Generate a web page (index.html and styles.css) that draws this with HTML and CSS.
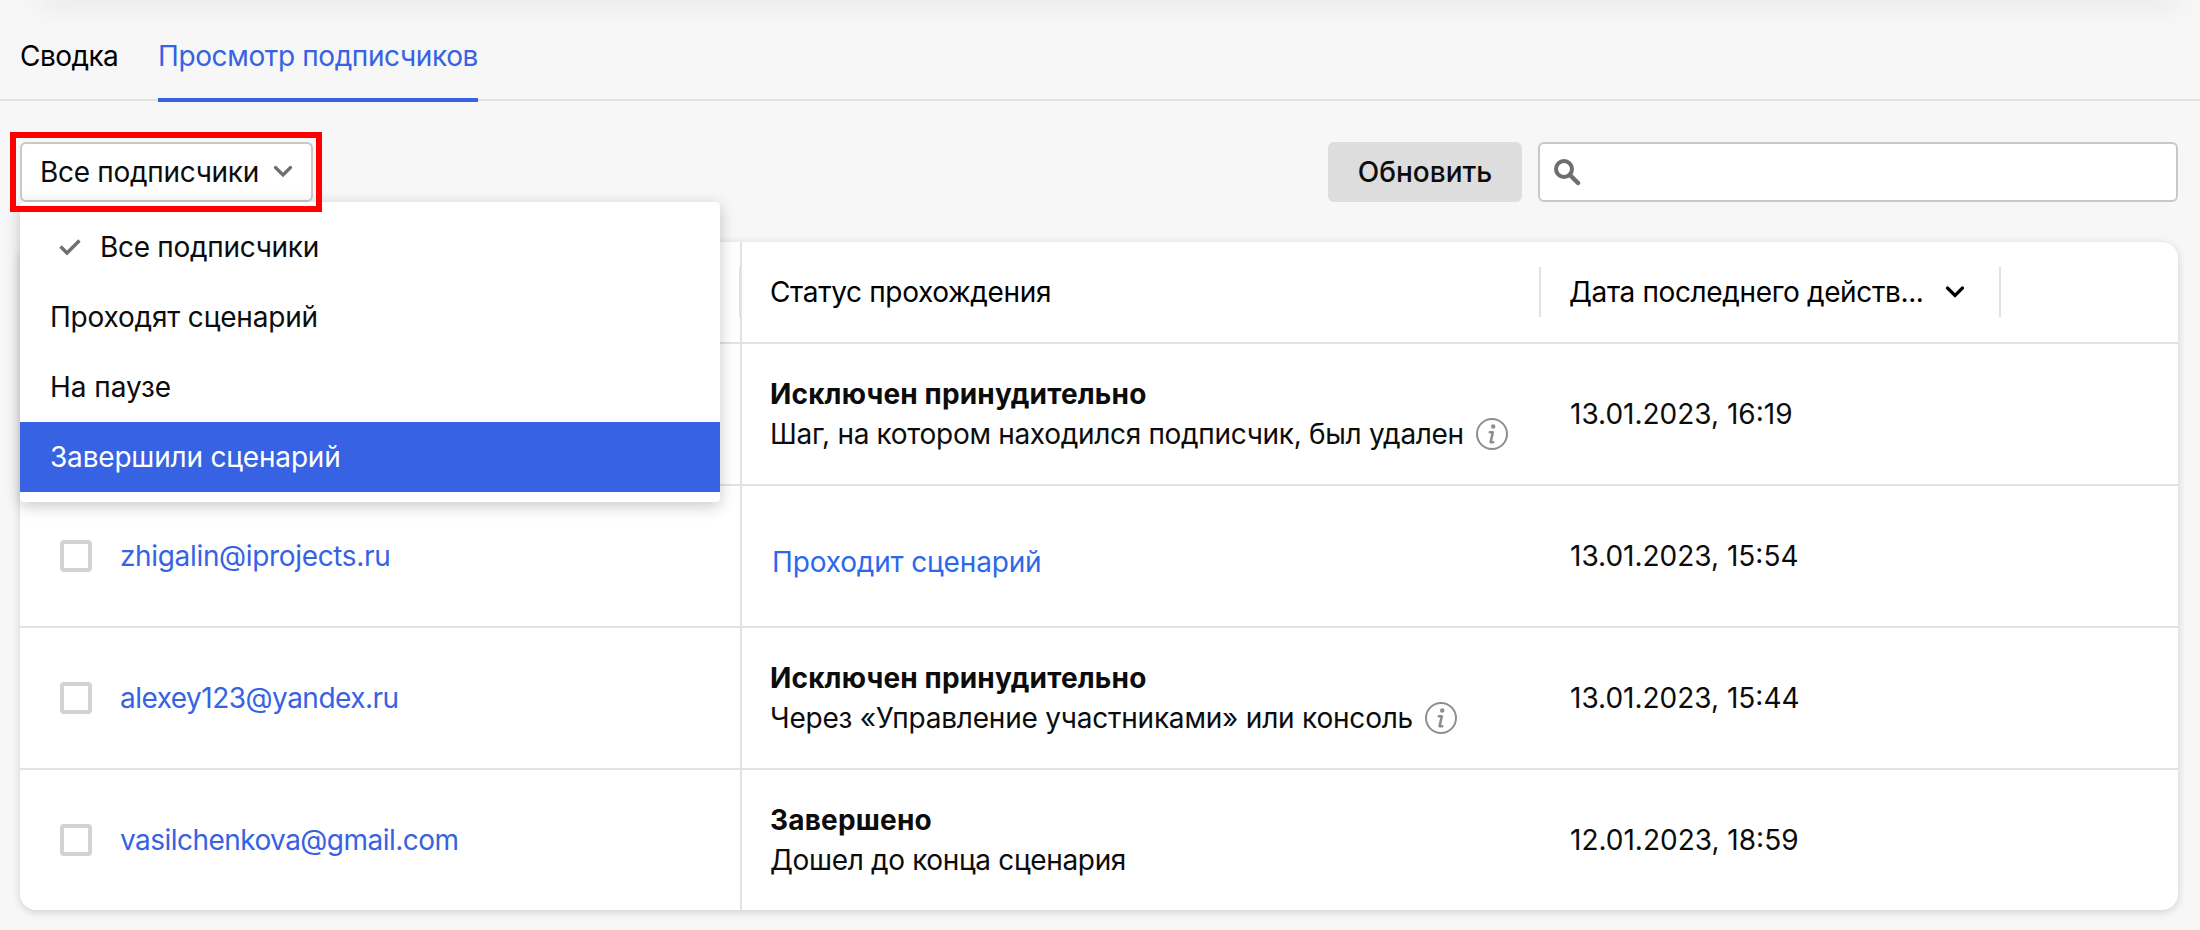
FILE: index.html
```html
<!DOCTYPE html>
<html lang="ru">
<head>
<meta charset="utf-8">
<title>Просмотр подписчиков</title>
<link rel="stylesheet" href="styles.css">
</head>
<body>
<div class="topbar"></div>
<nav class="tabs">
  <a class="tab t-summary"><span>Сводка</span></a>
  <a class="tab tab-active t-view"><span>Просмотр подписчиков</span></a>
</nav>
<div class="toolbar">
  <div class="filter">
    <button class="select"><span class="t-all">Все подписчики</span>
      <svg width="20" height="14" viewBox="0 0 20 14"><path d="M2.500 2.500 10 10 17.500 2.500" fill="none" stroke="#6e6e6e" stroke-width="3.200" stroke-linecap="round"/></svg>
    </button>
    <div class="menu">
      <div class="item item-checked">
        <svg width="24" height="18" viewBox="0 0 24 18"><path d="M2.500 8.500 9 15 21.500 2.500" fill="none" stroke="#707070" stroke-width="3.400"/></svg>
        <span class="t-all">Все подписчики</span>
      </div>
      <div class="item"><span class="t-going">Проходят сценарий</span></div>
      <div class="item"><span class="t-pause">На паузе</span></div>
      <div class="item item-hover"><span class="t-going">Завершили сценарий</span></div>
    </div>
    <div class="highlight"></div>
  </div>
  <div class="actions">
    <button class="refresh"><span>Обновить</span></button>
    <div class="search">
      <svg width="28" height="28" viewBox="0 0 28 28"><circle cx="11" cy="11" r="8" fill="none" stroke="#6e6e6e" stroke-width="4"/><path d="M17 17 25 25" stroke="#6e6e6e" stroke-width="4.500" stroke-linecap="round"/></svg>
    </div>
  </div>
</div>
<div class="table">
  <div class="row head">
    <div class="cell"><i class="sep"></i></div>
    <div class="cell"><span class="t-status">Статус прохождения</span><i class="sep"></i></div>
    <div class="cell"><span class="t-date">Дата последнего действ...</span>
      <svg class="sort" width="20" height="14" viewBox="0 0 20 14"><path d="M2.500 3 10 10.500 17.500 3" fill="none" stroke="#000" stroke-width="3.200" stroke-linecap="round"/></svg>
      <i class="sep"></i></div>
    <div class="cell"></div>
  </div>
  <div class="row">
    <div class="cell"></div>
    <div class="cell">
      <div class="status">
        <div class="line"><b class="t-excl">Исключен принудительно</b></div>
        <div class="line"><span class="t-step">Шаг, на котором находился подписчик, был удален</span>
          <svg class="info" width="32" height="32" viewBox="0 0 32 32"><circle cx="16" cy="16" r="15" fill="none" stroke="#8e8e8e" stroke-width="2"/><circle cx="17.200" cy="8.500" r="2.200" fill="#8e8e8e"/><path d="M13.800 14.200H16.800L14.600 24.300H17.200" fill="none" stroke="#8e8e8e" stroke-width="2.600" stroke-linejoin="round" stroke-linecap="round"/></svg>
        </div>
      </div>
    </div>
    <div class="cell"><span>13.01.2023, 16:19</span></div>
    <div class="cell"></div>
  </div>
  <div class="row">
    <div class="cell"><i class="check"></i><a class="mail t-m1">zhigalin@iprojects.ru</a></div>
    <div class="cell"><span class="going">Проходит сценарий</span></div>
    <div class="cell"><span>13.01.2023, 15:54</span></div>
    <div class="cell"></div>
  </div>
  <div class="row">
    <div class="cell"><i class="check"></i><a class="mail t-m2">alexey123@yandex.ru</a></div>
    <div class="cell">
      <div class="status">
        <div class="line"><b class="t-excl">Исключен принудительно</b></div>
        <div class="line"><span class="t-via">Через «Управление участниками» или консоль</span>
          <svg class="info" width="32" height="32" viewBox="0 0 32 32"><circle cx="16" cy="16" r="15" fill="none" stroke="#8e8e8e" stroke-width="2"/><circle cx="17.200" cy="8.500" r="2.200" fill="#8e8e8e"/><path d="M13.800 14.200H16.800L14.600 24.300H17.200" fill="none" stroke="#8e8e8e" stroke-width="2.600" stroke-linejoin="round" stroke-linecap="round"/></svg>
        </div>
      </div>
    </div>
    <div class="cell"><span>13.01.2023, 15:44</span></div>
    <div class="cell"></div>
  </div>
  <div class="row">
    <div class="cell"><i class="check"></i><a class="mail t-m3">vasilchenkova@gmail.com</a></div>
    <div class="cell">
      <div class="status">
        <div class="line"><b class="t-fin">Завершено</b></div>
        <div class="line"><span class="t-end">Дошел до конца сценария</span></div>
      </div>
    </div>
    <div class="cell"><span>12.01.2023, 18:59</span></div>
    <div class="cell"></div>
  </div>
</div>
</body>
</html>
```
FILE: styles.css
```css
* { box-sizing: border-box; }
body {
  margin: 0;
  height: 930px;
  overflow: hidden;
  background: #f7f7f7;
  color: #0c0c0c;
  font: 400 28px/40px Inter, "Liberation Sans", sans-serif;
}
svg { display: block; flex: none; }
span, b, a { white-space: nowrap; }
b { font-weight: 700; }
button { font: inherit; color: inherit; cursor: pointer; }

.topbar { height: 10px; margin: -10px 20px 0 40px; box-shadow: 0 2px 28px rgba(0, 0, 0, .13); }

.tabs {
  display: flex;
  gap: 40px;
  height: 101px;
  padding-left: 20px;
  border-bottom: 2px solid #e2e2e2;
  color: #000;
}
.tab { height: 102px; padding-top: 36px; }
.tab-active { width: 320px; border-bottom: 4px solid #3662e3; color: #3662e3; }
.t-summary { width: 98px; letter-spacing: -.55px; }
.t-view { letter-spacing: -.38px; }

.toolbar {
  display: flex;
  justify-content: space-between;
  margin-top: 41px;
  padding: 0 22px 0 20px;
}
.filter { position: relative; z-index: 2; }
.select {
  display: flex;
  align-items: center;
  justify-content: space-between;
  width: 293px;
  height: 60px;
  padding: 0 18px 0 18px;
  border: 2px solid #c8c8c8;
  border-radius: 6px;
  background: #fff;
}
.menu {
  position: absolute;
  top: 60px;
  left: 0;
  width: 700px;
  padding: 10px 0;
  border-radius: 4px;
  background: #fff;
  box-shadow: 0 4px 16px rgba(0, 0, 0, .22);
}
.item { display: flex; align-items: center; height: 70px; padding-left: 30px; }
.item-checked { gap: 18px; padding-left: 38px; }
.item-hover { background: #3662e3; color: #fff; }
.t-all { letter-spacing: -.3px; }
.t-going { letter-spacing: -.19px; }
.t-pause { letter-spacing: -.05px; }
.highlight {
  position: absolute;
  top: -10px;
  left: -10px;
  width: 312px;
  height: 80px;
  border: 6px solid #f00;
}

.actions { display: flex; gap: 16px; }
.refresh {
  width: 194px;
  height: 60px;
  padding: 0;
  border: 0;
  border-radius: 6px;
  background: #ddd;
  font-weight: 500;
}
.search {
  display: flex;
  align-items: center;
  width: 640px;
  height: 60px;
  padding-left: 13px;
  border: 2px solid #c8c8c8;
  border-radius: 6px;
  background: #fff;
}

.table {
  margin: 40px 22px 0 20px;
  border-radius: 16px;
  background: #fff;
  box-shadow: 0 2px 8px rgba(0, 0, 0, .16);
}
.row {
  display: grid;
  grid-template-columns: 722px 799px 460px 177px;
  height: 142px;
  border-top: 2px solid #e2e2e2;
}
.head { height: 100px; border-top: 0; color: #000; }
.cell { display: flex; align-items: center; padding-left: 29px; }
.cell:first-child { padding-left: 40px; border-right: 2px solid #e2e2e2; }
.cell:nth-child(2) { padding-left: 28px; }
.head .cell:nth-child(3) { padding-left: 28px; }
.sep { width: 2px; height: 50px; margin-left: auto; background: #e2e2e2; }
.cell:first-child .sep { margin-right: -1px; }
.sort { margin-left: 21px; }
.check { width: 32px; height: 32px; margin-right: 28px; border: 4px solid #d2d2d7; border-radius: 4px; }
.mail { color: #3662e3; }
.line { display: flex; align-items: center; gap: 12px; height: 40px; }
.going { padding: 12px 0 0 2px; color: #2b68ec; letter-spacing: -.16px; }
.t-status { letter-spacing: -.36px; }
.t-date { letter-spacing: -.37px; }
.t-excl { letter-spacing: .16px; }
.t-step { letter-spacing: -.31px; }
.t-via { letter-spacing: -.21px; }
.t-fin { letter-spacing: .2px; }
.t-end { letter-spacing: -.35px; }
.t-m1 { letter-spacing: -.34px; }
.t-m2 { letter-spacing: -.51px; }
.t-m3 { letter-spacing: -.54px; }
```
